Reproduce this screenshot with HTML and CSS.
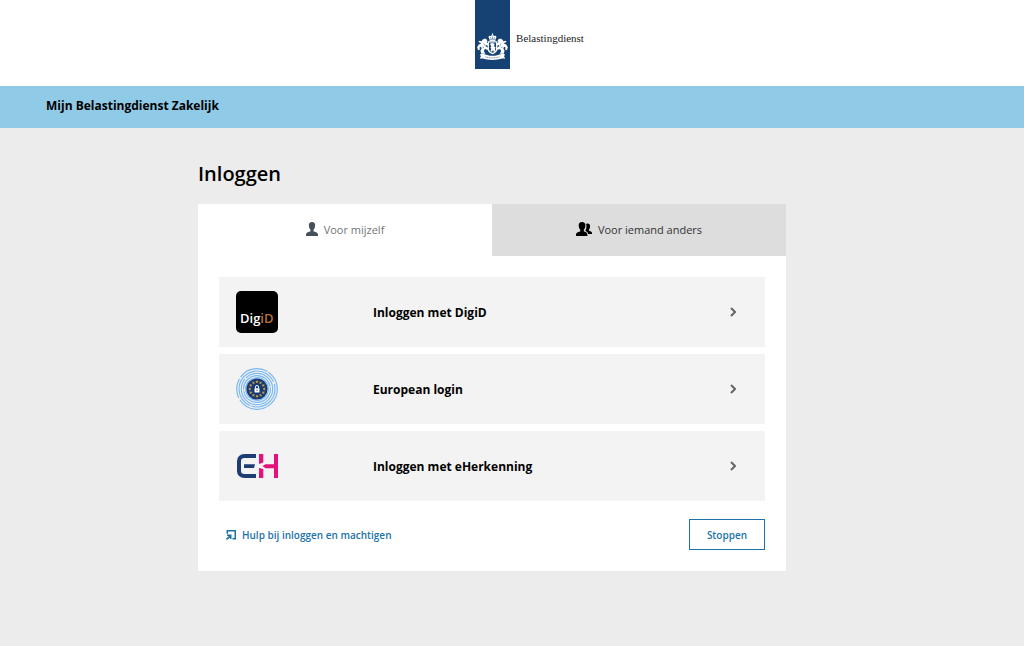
FILE: index.html
```html
<!DOCTYPE html>
<html lang="nl">
<head>
<meta charset="utf-8">
<meta name="viewport" content="width=device-width, initial-scale=1">
<title>Inloggen - Mijn Belastingdienst Zakelijk</title>
<link rel="stylesheet" href="styles.css">
</head>
<body>
<header class="masthead">
  <div class="ribbon">
    <svg class="arms" viewBox="0 0 32 28" fill="#fff" aria-hidden="true">
      <path d="M16 0l.8 1.2-.4.8h-.8l-.4-.8z"/>
      <path d="M12.600 5.800C11 4 12.400 2.300 14 3c.6-1 3.400-1 4 0 1.600-.7 3 1 1.400 2.800l-.4 2.400h-6z"/>
      <path d="M14 4.300l.6 2M18 4.300l-.6 2M16 3.600v2.600M12.800 6.900h6.400" stroke="#154273" stroke-width=".5"/>
      <path d="M11 8.600h10v8c0 3-2.800 4.500-5 5.500-2.200-1-5-2.500-5-5.500z"/>
      <path d="M12.300 9.900h7.400v6.400c0 2.200-2 3.400-3.700 4.300-1.700-.9-3.700-2.100-3.700-4.300z" fill="#154273"/>
      <path d="M13.300 11.300l2.100-1 2.400.6.400 1.700-1.100 1 2 1.300-.6 2.100.6 1.600-1.700.8-.9-1.600-1.200 1.700-1.400-.8.900-2-1.100-1.600 1.100-1z"/>
      <g id="lion">
        <path d="M5.800 6.800l2.300-1 2.100 1 .5 1.700-1 .9 1.800 1.500v2.200l-2.300-.6-.4 1.300 2.700 1.500v2.200l-3.300-1-1.200 2.200 1.500 2.800H4.300l-.8-3 1.300-2.800-1-1.500-1.300.8.500 2.200-2 .8L.1 14.800l1.600-3 2.200-.7-.3-1L1.200 9.300l1.300-1.300 2.200.5z"/>
        <path d="M6.800 10.700l1.100 1-.4 1.300M5.500 14.500l1.800.8" fill="none" stroke="#154273" stroke-width=".5"/>
      </g>
      <use href="#lion" transform="matrix(-1 0 0 1 32 0)"/>
      <path d="M3 22.200c3-.9 6 .3 8.200.9 3 .7 6.600.7 9.600 0 2.200-.6 5.200-1.800 8.200-.9l-1 2 1.200 2.600c-3-.8-5.300.4-8 .8-3.400.4-7 .4-10.400 0-2.700-.4-5-1.600-8-.8L4 24.200z"/>
      <path d="M8.500 24.700c5 1.500 10 1.500 15 0" fill="none" stroke="#154273" stroke-width=".6" stroke-dasharray="1.200 .6"/>
    </svg>
  </div>
  <span class="brand">Belastingdienst</span>
</header>
<div class="titlebar">Mijn Belastingdienst Zakelijk</div>
<main class="page">
  <h1 class="heading">Inloggen</h1>
  <section class="card">
    <div class="tabs" role="tablist">
      <button class="tab tab-active" role="tab" aria-selected="true" type="button">
        <svg class="icon-person" viewBox="0 0 12 14" fill="#46505a" aria-hidden="true"><path d="M6 0c2.200 0 3.200 1.500 3.100 3.500-.1 2-.7 3.500-1.600 4.300v1.400c1.300.9 4.500 1 4.500 3.300V14H0v-1.500c0-2.300 3.200-2.400 4.500-3.300V7.800C3.600 7 3 5.500 2.900 3.500 2.800 1.500 3.800 0 6 0z"/></svg>
        <span>Voor mijzelf</span>
      </button>
      <button class="tab" role="tab" aria-selected="false" type="button">
        <svg class="icon-people" viewBox="0 0 16 14" aria-hidden="true"><path d="M6 0c2.400 0 3.500 1.500 3.400 3.500-.1 2-.7 3.500-1.600 4.300v1.400c1.300.9 3.600 1 3.600 3.300V14H0v-1.500c0-2.300 3.200-2.400 4.300-3.300V7.800C3.400 7 2.800 5.500 2.700 3.500 2.600 1.500 3.600 0 6 0z"/><path d="M10.100 1.900c2.400-.9 4.100.3 4 2.300 0 1.500-.5 2.700-1.200 3.400v1c1 .7 3.100.9 3.100 2.500v.9h-3.800c-.3-1.700-1.600-2.300-2.700-2.900v-.9c.9-1.300 1.400-4 .6-6.300z"/></svg>
        <span>Voor iemand anders</span>
      </button>
    </div>
    <div class="panel" role="tabpanel">
      <nav class="options">
        <a class="option" href="#digid">
          <svg class="logo" viewBox="0 0 42 42" aria-hidden="true"><rect width="42" height="42" rx="5"/><text class="logo-text" x="4" y="32" fill="#fff">Dig<tspan fill="#b3713a">iD</tspan></text></svg>
          <span class="label">Inloggen met DigiD</span>
          <svg class="chevron" viewBox="0 0 6 10" aria-hidden="true"><path d="M1 1l4 4-4 4"/></svg>
        </a>
        <a class="option" href="#european">
          <svg class="logo" viewBox="0 0 42 42" fill="none" aria-hidden="true">
            <g stroke="#7ab8f2" stroke-width="1.200">
              <circle cx="21" cy="21" r="20.300" stroke-dasharray="52 2 20 2 30 1"/>
              <circle cx="21" cy="21" r="18" stroke-dasharray="34 1 70 2"/>
              <circle cx="21" cy="21" r="15.700" stroke-dasharray="60 1"/>
              <circle cx="21" cy="21" r="13.400" stroke-dasharray="40 1"/>
              <circle cx="21" cy="21" r="11.300"/>
            </g>
            <circle cx="21" cy="21" r="10.600" fill="#173a72"/>
            <g fill="#c99b45"><path id="star" d="M21 12l.5 1.100 1.200.1-.9.800.3 1.200-1.100-.6-1.100.6.300-1.200-.9-.8 1.200-.1z"/><use href="#star" transform="rotate(30 21 21)"/><use href="#star" transform="rotate(60 21 21)"/><use href="#star" transform="rotate(90 21 21)"/><use href="#star" transform="rotate(120 21 21)"/><use href="#star" transform="rotate(150 21 21)"/><use href="#star" transform="rotate(180 21 21)"/><use href="#star" transform="rotate(210 21 21)"/><use href="#star" transform="rotate(240 21 21)"/><use href="#star" transform="rotate(270 21 21)"/><use href="#star" transform="rotate(300 21 21)"/><use href="#star" transform="rotate(330 21 21)"/></g>
            <path d="M19.400 20.500v-1.400a1.600 1.600 0 013.200 0v1.400" stroke="#fff"/>
            <rect x="18.500" y="20.300" width="5" height="4.200" rx=".4" fill="#fff"/>
            <path d="M21 21.600v1.500" stroke="#173a72" stroke-width=".8"/>
          </svg>
          <span class="label">European login</span>
          <svg class="chevron" viewBox="0 0 6 10" aria-hidden="true"><path d="M1 1l4 4-4 4"/></svg>
        </a>
        <a class="option" href="#eherkenning">
          <svg class="logo" viewBox="0 0 42 42" fill="none" aria-hidden="true">
            <path d="M20 11H8.500C5 11 3 13 3 16v10c0 3 2 5 5.500 5H20" stroke="#1d3c74" stroke-width="4"/>
            <path d="M8 19.300h11l-1 3.600H8z" fill="#1d3c74"/>
            <path d="M23 9h4.300v8.500L23 19zM23 23l4.300 1v9H23zM38 9h4v24h-4v-9.800H29.500L26.500 21l3-1.700H38z" fill="#e5117c"/>
          </svg>
          <span class="label">Inloggen met eHerkenning</span>
          <svg class="chevron" viewBox="0 0 6 10" aria-hidden="true"><path d="M1 1l4 4-4 4"/></svg>
        </a>
      </nav>
      <div class="actions">
        <a class="help" href="#help">
          <svg class="icon-external" viewBox="0 0 10 10" fill="none" stroke="#1b73a9" stroke-width="1.600" aria-hidden="true"><path d="M1.300 3.800V.8h8v8H6.500M.5 9.500L4.500 5.500M1 5.300h3.700V9"/></svg>
          <span>Hulp bij inloggen en machtigen</span>
        </a>
        <button class="stop" type="button">Stoppen</button>
      </div>
    </div>
  </section>
</main>
</body>
</html>
```
FILE: styles.css
```css
* {
  box-sizing: border-box;
}

body {
  margin: 0;
  min-height: 100vh;
  background: #ececec;
  color: #000;
  font-family: "Open Sans", "Noto Sans", sans-serif;
  font-size: 11px;
}

.masthead {
  display: flex;
  justify-content: center;
  align-items: flex-start;
  gap: 6px;
  padding: 0 0 17px 35px;
  background: #fff;
}

.ribbon {
  display: flex;
  align-items: flex-end;
  justify-content: center;
  width: 35px;
  height: 69px;
  padding-bottom: 9px;
  background: #154273;
}

.arms {
  width: 31px;
  height: 27px;
}

.brand {
  padding-top: 30px;
  color: #222;
  font-family: "Liberation Serif", serif;
  font-size: 11px;
  line-height: 16px;
}

.titlebar {
  padding: 0 46px 2px;
  background: #8fcae7;
  font-size: 12px;
  font-weight: 700;
  line-height: 40px;
}

.page {
  width: 100%;
  padding: 31px 40px 0 0;
}

.heading,
.card {
  width: 100%;
  max-width: 588px;
  margin: 0 auto;
}

.heading {
  margin-bottom: 15px;
  font-size: 20px;
  font-weight: 600;
  line-height: 30px;
}

.card {
  background: #fff;
}

.tabs {
  display: grid;
  grid-template-columns: 1fr 1fr;
}

.tab {
  display: flex;
  align-items: center;
  justify-content: center;
  gap: 6px;
  height: 52px;
  padding: 0 0 2px;
  border: 0;
  background: #ddd;
  color: #333;
  font: inherit;
}

.tab-active {
  background: #fff;
  color: #757575;
}

.icon-person {
  width: 12px;
  height: 14px;
}

.icon-people {
  width: 16px;
  height: 14px;
}

.panel {
  padding: 21px;
}

.options {
  display: grid;
  gap: 7px;
}

.option {
  display: flex;
  align-items: center;
  height: 70px;
  padding: 0 29px 0 17px;
  background: #f3f3f3;
  color: #000;
  font-size: 12px;
  font-weight: 700;
  text-decoration: none;
}

.logo {
  width: 42px;
  height: 42px;
}

.logo-text {
  font-size: 13px;
  font-weight: 600;
}

.label {
  flex: 1;
  padding-left: 95px;
}

.chevron {
  width: 6px;
  height: 10px;
  fill: none;
  stroke: #666;
  stroke-width: 2;
}

.actions {
  display: flex;
  align-items: center;
  justify-content: space-between;
  padding: 18px 0 0 7px;
}

.help {
  display: flex;
  align-items: center;
  gap: 6px;
  color: #1b73a9;
  font-size: 10px;
  font-weight: 600;
  text-decoration: none;
}

.icon-external {
  width: 10px;
  height: 10px;
}

.stop {
  height: 31px;
  padding: 0 17px;
  border: 1px solid #1b73a9;
  background: #fff;
  color: #1b73a9;
  font: inherit;
  font-size: 10px;
  font-weight: 600;
}
```
